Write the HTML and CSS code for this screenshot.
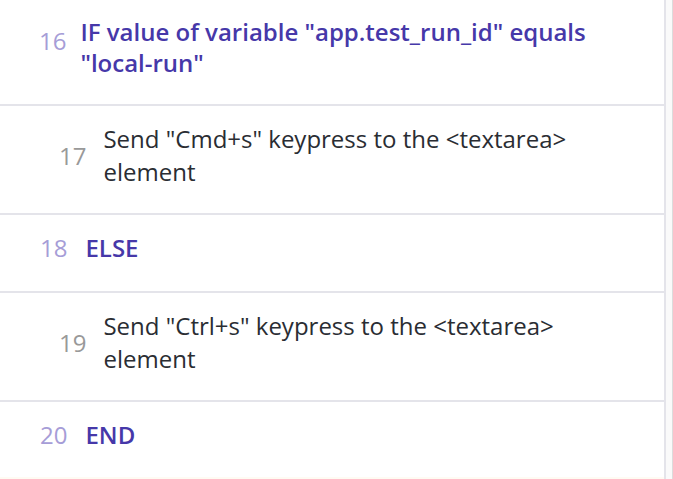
FILE: index.html
```html
<!DOCTYPE html>
<html>
<head>
<meta charset="utf-8">
<link rel="stylesheet" href="styles.css">
</head>
<body>
<div class="frame">
  <div class="panel">
    <div class="steps">
      <div class="step step-ctl step-if">
        <span class="num">16</span>
        <span class="text">IF value of variable "app.test_run_id" equals "local-run"</span>
      </div>
      <div class="step step-inner">
        <span class="num">17</span>
        <span class="text">Send "Cmd+s" keypress to the &lt;textarea&gt; element</span>
      </div>
      <div class="step step-ctl step-single">
        <span class="num">18</span>
        <span class="text">ELSE</span>
      </div>
      <div class="step step-inner">
        <span class="num">19</span>
        <span class="text">Send "Ctrl+s" keypress to the &lt;textarea&gt; element</span>
      </div>
      <div class="step step-ctl step-last">
        <span class="num">20</span>
        <span class="text">END</span>
      </div>
      <div class="step-next"></div>
    </div>
  </div>
  <div class="track"></div>
</div>
</body>
</html>
```

FILE: styles.css
```css
html, body {
  margin: 0;
  padding: 0;
  background: #ffffff;
  overflow: hidden;
}

.frame {
  display: flex;
  width: 673px;
  height: 479px;
  overflow: hidden;
  font-family: "Open Sans", "Noto Sans", sans-serif;
}

.panel {
  width: 664px;
  border-right: 2px solid #e4e4ea;
  overflow: hidden;
}

.track {
  flex: 1;
  background: #fafafa;
  border-right: 1px solid #dcdcdc;
}

.step {
  display: flex;
  align-items: center;
  border-bottom: 2px solid #e4e4ea;
  font-size: 24px;
  line-height: 33px;
  padding: 16px 40px 25px 40px;
}

.step .num {
  flex: none;
}

.step-ctl .num {
  color: #a69dd7;
  margin-right: 18px;
}

.step-ctl .text {
  color: #4638a9;
  font-weight: 600;
}

.step-if {
  line-height: 31px;
  padding-top: 16px;
  padding-bottom: 26px;
  padding-left: 39px;
}

.step-if .num {
  position: relative;
  top: -7px;
  margin-right: 14px;
}

.step-single {
  padding-bottom: 27px;
}

.step-last {
  padding-bottom: 26px;
  border-bottom: none;
}

.step-inner {
  padding-left: 59px;
}

.step-inner .num {
  color: #999999;
  margin-right: 17px;
}

.step-inner .text {
  color: #2a2d33;
}

.step-next {
  height: 40px;
  background: #fffbf3;
}
```
